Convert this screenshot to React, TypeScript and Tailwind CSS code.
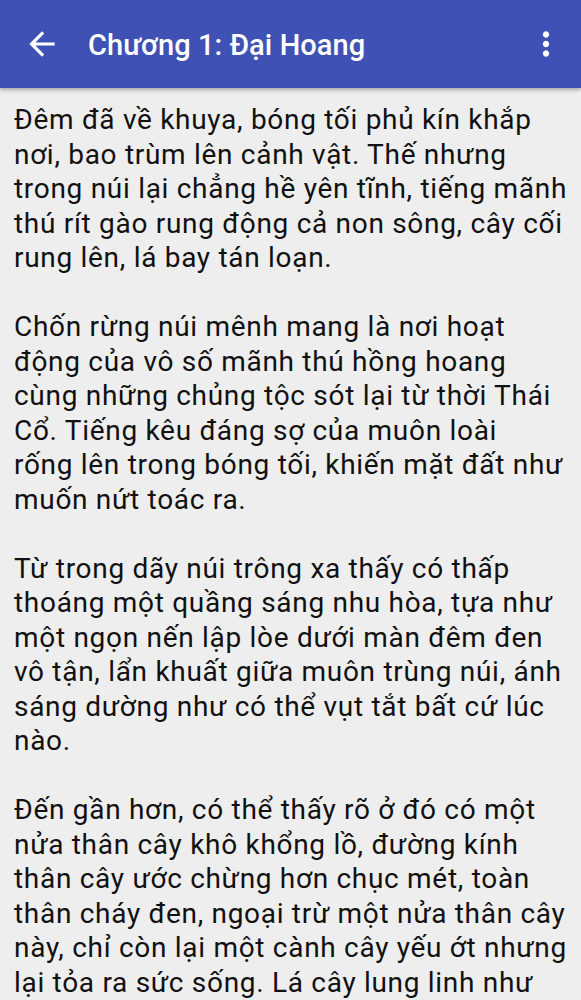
import React from "react";

const paragraphs: string[][] = [
  [
    "Đêm đã về khuya, bóng tối phủ kín khắp",
    "nơi, bao trùm lên cảnh vật. Thế nhưng",
    "trong núi lại chẳng hề yên tĩnh, tiếng mãnh",
    "thú rít gào rung động cả non sông, cây cối",
    "rung lên, lá bay tán loạn.",
  ],
  [
    "Chốn rừng núi mênh mang là nơi hoạt",
    "động của vô số mãnh thú hồng hoang",
    "cùng những chủng tộc sót lại từ thời Thái",
    "Cổ. Tiếng kêu đáng sợ của muôn loài",
    "rống lên trong bóng tối, khiến mặt đất như",
    "muốn nứt toác ra.",
  ],
  [
    "Từ trong dãy núi trông xa thấy có thấp",
    "thoáng một quầng sáng nhu hòa, tựa như",
    "một ngọn nến lập lòe dưới màn đêm đen",
    "vô tận, lẩn khuất giữa muôn trùng núi, ánh",
    "sáng dường như có thể vụt tắt bất cứ lúc",
    "nào.",
  ],
  [
    "Đến gần hơn, có thể thấy rõ ở đó có một",
    "nửa thân cây khô khổng lồ, đường kính",
    "thân cây ước chừng hơn chục mét, toàn",
    "thân cháy đen, ngoại trừ một nửa thân cây",
    "này, chỉ còn lại một cành cây yếu ớt nhưng",
    "lại tỏa ra sức sống. Lá cây lung linh như",
    "những mảnh ngọc bích, phát ra ánh sáng",
  ],
];

export default function App() {
  return (
    <div className="w-[581px] h-[1000px] overflow-hidden bg-[#eeeeee] font-['Roboto','Noto_Sans',sans-serif]">
      <header className="relative z-10 h-[88px] bg-[#3f51b5] flex items-center shadow-[0_2px_4px_rgba(0,0,0,0.3)]">
        <div className="w-[88px] flex items-center justify-center pr-[4px]">
          <svg width="38" height="38" viewBox="0 0 24 24" fill="white">
            <path d="M20 11H7.83l5.59-5.59L12 4l-8 8 8 8 1.41-1.41L7.83 13H20v-2z" />
          </svg>
        </div>
        <h1 className="flex-1 text-white text-[29px] font-medium leading-none tracking-[0.1px] pt-[3px]">
          Chương 1: Đại Hoang
        </h1>
        <div className="w-[72px] flex items-center justify-center pl-[1px]">
          <svg width="38" height="38" viewBox="0 0 24 24" fill="white">
            <path d="M12 8c1.1 0 2-.9 2-2s-.9-2-2-2-2 .9-2 2 .9 2 2 2zm0 2c-1.1 0-2 .9-2 2s.9 2 2 2 2-.9 2-2-.9-2-2-2zm0 6c-1.1 0-2 .9-2 2s.9 2 2 2 2-.9 2-2-.9-2-2-2z" />
          </svg>
        </div>
      </header>
      <main className="px-[14px] pt-[15px] text-[28px] leading-[34.5px] tracking-[0.7px] text-[#111111]">
        {paragraphs.map((lines, i) => (
          <div key={i} className="mb-[34.5px]">
            {lines.map((l, j) => (
              <div key={j} className="whitespace-nowrap">
                {l}
              </div>
            ))}
          </div>
        ))}
      </main>
    </div>
  );
}
